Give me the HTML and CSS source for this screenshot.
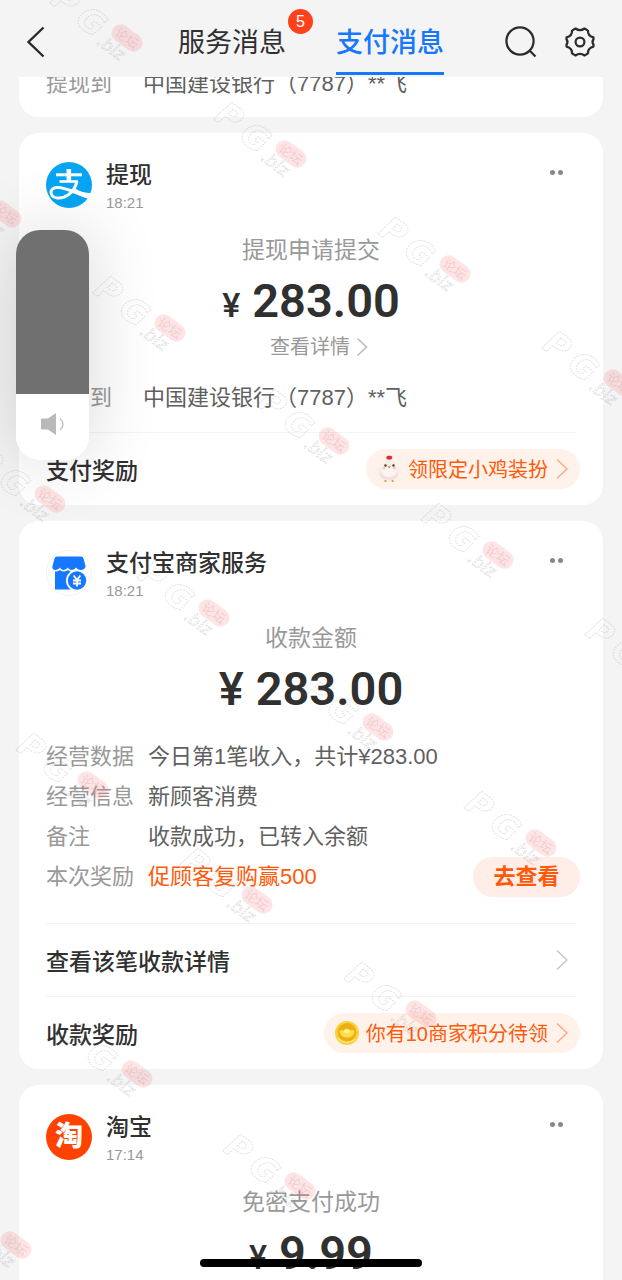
FILE: index.html
```html
<!DOCTYPE html>
<html lang="zh-CN">
<head>
<meta charset="utf-8">
<meta name="viewport" content="width=device-width, initial-scale=1">
<title>支付消息</title>
<link rel="stylesheet" href="styles.css">
</head>
<body>
<div class="screen">
  <header class="topbar">
    <button class="icon-btn back" type="button" aria-label="返回">
      <svg width="20" height="32" viewBox="0 0 20 32" fill="none" stroke="#2b2b2b" stroke-width="2.4"><path d="M17.500 1.500 2.500 16 17.500 30.500"/></svg>
    </button>
    <nav class="tabs">
      <a class="tab" href="#service">服务消息<span class="badge">5</span></a>
      <a class="tab tab-active" href="#payment" aria-current="page">支付消息</a>
    </nav>
    <div class="tools">
      <button class="icon-btn" type="button" aria-label="搜索">
        <svg width="34" height="34" viewBox="0 0 34 34" fill="none" stroke="#2b2b2b" stroke-width="2.200"><circle cx="16" cy="16" r="13.600"/><path d="m25.500 25.500 6 6"/></svg>
      </button>
      <button class="icon-btn" type="button" aria-label="设置">
        <svg width="32" height="32" viewBox="0 0 32 32" fill="none" stroke="#2b2b2b" stroke-width="2.200" stroke-linejoin="round"><path d="M11.500 2.500 Q16 5.800 20.500 2.500 L24 4.600 Q23.600 9.800 29.400 11.400 L29.600 13 Q27.400 16 29.600 19 L29.400 20.600 Q23.600 22.200 24 27.400 L20.500 29.500 Q16 26.200 11.500 29.500 L8 27.400 Q8.400 22.200 2.600 20.600 L2.400 19 Q4.600 16 2.400 13 L2.600 11.400 Q8.400 9.800 8 4.600 Z"/><circle cx="16" cy="16" r="4.400"/></svg>
      </button>
    </div>
  </header>

  <main class="feed" id="payment">
    <article class="card card-tail">
      <dl class="facts">
        <div class="fact"><dt>提现到</dt><dd>中国建设银行（7787）**飞</dd></div>
      </dl>
    </article>

    <article class="card">
      <div class="card-head">
        <svg class="avatar" viewBox="0 0 46 46" fill="none" stroke="#fff"><circle cx="23" cy="23" r="23" fill="#06a5f3" stroke="none"/><g stroke-width="3"><path d="M10 12.800H36"/><path d="M13.500 19.500H32" stroke-width="2.600"/><path d="M22.800 7V19" stroke-width="4.600"/></g><path d="M31 19.500C28 31 19 37 11 36 3.500 35 3 26.500 10 25.500 19 24.200 31 32 44.500 36" stroke-width="3"/><path d="M29 26.500C34 29.500 39 31 45.500 31.300L43.500 35.800C38 34.500 32 31.500 27.500 29Z" fill="#fff" stroke="none"/></svg>
        <div class="who"><h2>提现</h2><time>18:21</time></div>
        <button class="more" type="button" aria-label="更多"><i></i><i></i></button>
      </div>
      <p class="caption">提现申请提交</p>
      <p class="amount"><span class="yen">¥</span>283.00</p>
      <a class="detail" href="#detail">查看详情<svg width="12" height="20" viewBox="0 0 12 20" fill="none" stroke="#bbb" stroke-width="1.500"><path d="m1.500 1.500 9 8.500-9 8.500"/></svg></a>
      <dl class="facts facts-solo">
        <div class="fact"><dt>提现到</dt><dd>中国建设银行（7787）**飞</dd></div>
      </dl>
      <div class="strip">
        <h3>支付奖励</h3>
        <a class="reward" href="#reward">
          <svg width="26" height="28" viewBox="0 0 26 28"><path d="M9.500 25v2M16.500 25v2" stroke="#d99a55" stroke-width="2"/><path d="M13 4C8 4 7 8 6.500 12 5 13.500 2.500 12 2 14.500 1.500 21 6 25.500 13 25.500S24.500 21 24 14.500C23.500 12 21 13.500 19.500 12 19 8 18 4 13 4Z" fill="#f8ece9"/><ellipse cx="13" cy="19.500" rx="9" ry="5.500" fill="#f3dfe0"/><ellipse cx="13" cy="16" rx="8" ry="6" fill="#fbf4f1"/><path d="M11.500 4.500C8.500 2 12 0 13 1c3-1 4.500 2 2 3.500Z" fill="#d92f28"/><circle cx="9.500" cy="10.500" r="1.200" fill="#4e3535"/><circle cx="17.500" cy="10.500" r="1.200" fill="#4e3535"/><circle cx="8" cy="13" r="1.500" fill="#f8c6c0"/><circle cx="18.500" cy="13" r="1.500" fill="#f8c6c0"/><path d="m11.500 11.500 1.700-1 1.700 1-1.700 2Z" fill="#e9a936"/></svg>
          <span>领限定小鸡装扮</span>
          <svg width="12" height="22" viewBox="0 0 12 22" fill="none" stroke="#ffa984" stroke-width="1.500"><path d="m1 1.500 10 9.500-10 9.500"/></svg>
        </a>
      </div>
    </article>

    <article class="card">
      <div class="card-head">
        <svg class="avatar" viewBox="0 0 46 46"><circle cx="23" cy="23" r="22.500" fill="#fff" stroke="#f3f3f3"/><g transform="translate(0 -1)"><path d="M11 7.500H35Q37 7.500 37.500 9.500L39.500 17C39.500 20 36.500 21 34.500 21 32 21 31 19.500 30 18.500 29 20 27 21 25.500 21 24 21 22.500 20 22 18.500 21 20 19 21 17.500 21 16 21 14.500 20 14 18.500 13 20 11 21 9.500 21 7 21 6 19.500 6.500 17L8.500 9.500Q9 7.500 11 7.500Z" fill="#1677ff"/><path d="M9 22.500Q12 22.500 14 21 17.500 24 22 21 26 24 30 21 32 22.500 35 22.500V40.500H9Z" fill="#1677ff"/><circle cx="31" cy="31.500" r="11" fill="#fff"/><circle cx="31" cy="31.500" r="9.200" fill="#1677ff"/><path d="m27.700 26.500 3.300 4.500 3.300-4.500M31 31v6.500M27 31.500h8M27 34.500h8" fill="none" stroke="#fff" stroke-width="1.800"/></g></svg>
        <div class="who"><h2>支付宝商家服务</h2><time>18:21</time></div>
        <button class="more" type="button" aria-label="更多"><i></i><i></i></button>
      </div>
      <p class="caption">收款金额</p>
      <p class="amount"><span class="yen yen-big">¥</span>283.00</p>
      <dl class="facts facts-wide">
        <div class="fact"><dt>经营数据</dt><dd>今日第1笔收入，共计¥283.00</dd></div>
        <div class="fact"><dt>经营信息</dt><dd>新顾客消费</dd></div>
        <div class="fact"><dt>备注</dt><dd>收款成功，已转入余额</dd></div>
        <div class="fact fact-hot"><dt>本次奖励</dt><dd>促顾客复购赢500</dd><dd class="act"><button class="go" type="button">去查看</button></dd></div>
      </dl>
      <a class="strip" href="#bill">
        <h3>查看该笔收款详情</h3>
        <svg class="arrow" width="12" height="22" viewBox="0 0 12 22" fill="none" stroke="#c4c4c4" stroke-width="1.500"><path d="m1 1.500 10 9.500-10 9.500"/></svg>
      </a>
      <div class="strip">
        <h3>收款奖励</h3>
        <a class="reward" href="#points">
          <svg width="26" height="26" viewBox="0 0 26 26"><circle cx="13" cy="13" r="12" fill="#f9d43a"/><circle cx="13" cy="12.500" r="9.500" fill="#f0ae16"/><path d="M5.500 11C7 9.500 9 10 10 11 11.500 8 14.500 8 16 11 17 10 19 9.500 20.500 11 20 15.500 17 17.500 13 17.500S6 15.500 5.500 11Z" fill="#ffe04b"/><ellipse cx="13" cy="11" rx="3" ry="2" fill="#fff18c"/><path d="M4 18Q12 26 21 19" fill="none" stroke="#fff0a0"/></svg>
          <span>你有10商家积分待领</span>
          <svg width="12" height="22" viewBox="0 0 12 22" fill="none" stroke="#ffa984" stroke-width="1.500"><path d="m1 1.500 10 9.500-10 9.500"/></svg>
        </a>
      </div>
    </article>

    <article class="card card-last">
      <div class="card-head">
        <span class="avatar avatar-tao" aria-hidden="true">淘</span>
        <div class="who"><h2>淘宝</h2><time>17:14</time></div>
        <button class="more" type="button" aria-label="更多"><i></i><i></i></button>
      </div>
      <p class="caption">免密支付成功</p>
      <p class="amount"><span class="yen">¥</span>9.99</p>
    </article>
  </main>

  <div class="volume" role="img" aria-label="音量">
    <div class="volume-rest"></div>
    <div class="volume-level">
      <svg width="26" height="24" viewBox="0 0 26 24"><path d="M2 6.500H8L16 1V23L8 17.500H2Q1 17.500 1 16.500V7.500Q1 6.500 2 6.500Z" fill="#b9b9b9"/><path d="M20 6.500Q26 12 20 18" fill="none" stroke="#c4c4c4" stroke-width="1.600"/></svg>
    </div>
  </div>

  <svg class="marks" aria-hidden="true">
    <defs>
      <g id="mark">
        <g transform="rotate(36)">
          <g class="mark-line">
            <text class="mark-big" x="-84" y="17">P</text>
            <text class="mark-big" x="-52" y="19">G</text>
            <text class="mark-small" x="-22" y="23">.biz</text>
          </g>
          <rect x="-17" y="-9" width="34" height="18" rx="9" fill="#ff5a5f" fill-opacity=".16"/>
          <text class="mark-tag" x="0" y="5">论坛</text>
        </g>
      </g>
    </defs>
    <use href="#mark" x="127" y="38"/><use href="#mark" x="291" y="154"/><use href="#mark" x="455" y="269"/><use href="#mark" x="619" y="383"/>
    <use href="#mark" x="6" y="214"/><use href="#mark" x="170" y="328"/><use href="#mark" x="334" y="441"/><use href="#mark" x="498" y="555"/><use href="#mark" x="662" y="670"/>
    <use href="#mark" x="50" y="499"/><use href="#mark" x="214" y="613"/><use href="#mark" x="378" y="727"/><use href="#mark" x="541" y="843"/>
    <use href="#mark" x="93" y="785"/><use href="#mark" x="257" y="900"/><use href="#mark" x="421" y="1014"/>
    <use href="#mark" x="137" y="1074"/><use href="#mark" x="300" y="1186"/><use href="#mark" x="16" y="1245"/>
  </svg>
  <div class="home-bar"></div>
</div>
</body>
</html>
```
FILE: styles.css
```css
* { box-sizing: border-box; }
body, h2, h3, p, dl, dd { margin: 0; }
body {
  background: #f4f4f4;
  color: #303030;
  font-family: "Liberation Sans", "Noto Sans CJK SC", sans-serif;
}
a { color: inherit; text-decoration: none; }
button { border: 0; padding: 0; background: none; font: inherit; color: inherit; cursor: pointer; }
svg { display: block; }

.screen {
  position: relative;
  display: flex;
  flex-direction: column;
  height: 100vh;
  overflow: hidden;
}

.topbar {
  flex: none;
  display: grid;
  grid-template-columns: 1fr auto 1fr;
  align-items: center;
  height: 77px;
  padding: 6px 26px 0;
}
.icon-btn { display: flex; }
.tabs { display: flex; gap: 50px; height: 100%; }
.tab {
  position: relative;
  padding-top: 3px;
  font-size: 27px;
  line-height: 68px;
}
.tab-active { color: #1677ff; font-weight: 500; }
.tab-active::after {
  content: "";
  position: absolute;
  left: 0;
  right: 0;
  bottom: 2px;
  height: 3px;
  background: #1677ff;
}
.badge {
  position: absolute;
  top: 3px;
  right: -27px;
  width: 25px;
  height: 25px;
  border-radius: 50%;
  background: #ff411c;
  color: #fff;
  font-size: 16px;
  line-height: 25px;
  text-align: center;
}
.tools { display: flex; justify-content: flex-end; align-items: center; gap: 26px; }

.feed {
  flex: 1;
  min-height: 0;
  display: flex;
  flex-direction: column;
  gap: 16px;
  padding: 0 19px;
  overflow: hidden;
}
.card {
  flex: none;
  padding: 27px 27px 0;
  border-radius: 20px;
  background: #fff;
}
.card-tail { margin-top: -40px; padding-top: 31px; padding-bottom: 17px; }
.card-last { padding-bottom: 60px; }
.card-last .amount { height: 47px; overflow: hidden; }

.card-head { display: flex; gap: 14px; height: 54px; }
.avatar { flex: none; width: 46px; height: 46px; margin-top: 2px; }
.avatar-tao {
  border-radius: 50%;
  background: #ff4200;
  color: #fff;
  font-size: 28px;
  font-weight: 900;
  line-height: 45px;
  text-align: center;
}
.who { flex: 1; }
.who h2 { font-size: 23px; font-weight: 500; line-height: 30px; }
.who time { display: block; color: #999; font-size: 15px; line-height: 26px; }
.more { display: flex; align-items: flex-start; gap: 3px; padding: 10px 13px 0 10px; }
.more i { width: 5px; height: 5px; border-radius: 50%; background: #888; }

.caption {
  margin-top: 20px;
  color: #999;
  font-size: 23px;
  line-height: 32px;
  text-align: center;
}
.amount {
  display: flex;
  justify-content: center;
  align-items: baseline;
  gap: 12px;
  margin-top: 6px;
  color: #303030;
  font-family: Roboto, "Liberation Sans", sans-serif;
  font-size: 47px;
  font-weight: 600;
  line-height: 58px;
}
.yen { font-size: 34px; font-weight: 500; }
.yen-big { font-size: 47px; }
.detail {
  display: flex;
  justify-content: center;
  align-items: center;
  gap: 6px;
  padding-left: 16px;
  color: #999;
  font-size: 20px;
  line-height: 26px;
}

.facts { font-size: 22px; }
.facts-solo { margin: 22px 0 18px; }
.facts-wide { margin: 19px -4px 26px 0; }
.fact { display: flex; align-items: center; line-height: 32px; }
.fact dt { flex: none; width: 97px; color: #999; }
.fact dd { color: #606060; }
.facts-wide .fact { line-height: 40px; }
.facts-wide dt { width: 102px; }
.fact .act { margin-left: auto; }
.fact-hot dd { color: #ff5a0a; }
.go {
  display: block;
  width: 107px;
  height: 40px;
  border-radius: 20px;
  background: #ffede7;
  color: #ff5a0a;
  font-weight: 700;
  line-height: 40px;
}

.strip {
  position: relative;
  display: flex;
  justify-content: space-between;
  align-items: center;
  height: 73px;
  margin-right: -4px;
}
.strip::before {
  content: "";
  position: absolute;
  top: 0;
  left: 0;
  right: 4px;
  height: 1px;
  background: #f3f3f3;
}
.strip h3 { font-size: 23px; font-weight: 500; }
.arrow { margin-right: 12px; }
.reward {
  display: flex;
  align-items: center;
  gap: 6px;
  height: 40px;
  padding: 0 12px 0 10px;
  border-radius: 20px;
  background: #fff2ea;
  color: #ff5a0a;
  font-size: 20px;
}
.reward span { margin-right: 2px; }

.volume {
  position: absolute;
  top: 230px;
  left: 16px;
  width: 73px;
  height: 230px;
  display: flex;
  flex-direction: column;
  border-radius: 24px;
  box-shadow: 0 0 70px rgba(0, 0, 0, .16);
  overflow: hidden;
}
.volume-rest { flex: 1; background: #707070; }
.volume-level {
  display: flex;
  justify-content: center;
  align-items: center;
  height: 66px;
  padding-bottom: 6px;
  background: #fff;
}

.marks {
  position: absolute;
  inset: 0;
  width: 100%;
  height: 100%;
  pointer-events: none;
}
.mark-line {
  fill: none;
  stroke: #8a8a92;
  stroke-opacity: .26;
  stroke-width: 1;
  stroke-dasharray: 2 1;
}
.mark-big { font: italic 700 33px "DejaVu Sans", sans-serif; }
.mark-small { font: italic 400 17px "DejaVu Sans", sans-serif; }
.mark-tag {
  fill: #c9a0a4;
  fill-opacity: .35;
  font: 400 13px "Noto Sans CJK SC", sans-serif;
  text-anchor: middle;
}
.home-bar {
  position: absolute;
  bottom: 13px;
  left: 50%;
  width: 222px;
  height: 8px;
  margin-left: -111px;
  border-radius: 4px;
  background: #000;
}
```
